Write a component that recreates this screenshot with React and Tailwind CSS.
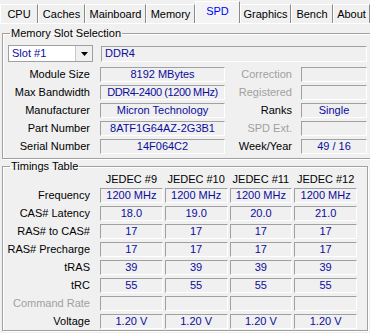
import React from 'react';

const tabs = [
  { label: 'CPU', w: 'w-[38px]' },
  { label: 'Caches', w: 'w-[47px]' },
  { label: 'Mainboard', w: 'w-[61px]' },
  { label: 'Memory', w: 'w-[49px]' },
  { label: 'SPD', w: 'w-[45px]', active: true },
  { label: 'Graphics', w: 'w-[51px]' },
  { label: 'Bench', w: 'w-[42px]' },
  { label: 'About', w: 'w-[37px]' },
];

const timings = [
  { label: 'Frequency', values: ['1200 MHz', '1200 MHz', '1200 MHz', '1200 MHz'] },
  { label: 'CAS# Latency', values: ['18.0', '19.0', '20.0', '21.0'] },
  { label: 'RAS# to CAS#', values: ['17', '17', '17', '17'] },
  { label: 'RAS# Precharge', values: ['17', '17', '17', '17'] },
  { label: 'tRAS', values: ['39', '39', '39', '39'] },
  { label: 'tRC', values: ['55', '55', '55', '55'] },
  { label: 'Command Rate', values: ['', '', '', ''], disabled: true },
  { label: 'Voltage', values: ['1.20 V', '1.20 V', '1.20 V', '1.20 V'] },
];

const Box = ({ children, className = '', align = 'text-center' }) => (
  <div
    className={`h-[15px] border border-t-[#a0a0a0] border-l-[#a0a0a0] border-b-white border-r-white text-[#0b0b9c] leading-[13px] whitespace-nowrap overflow-hidden ${align} ${className}`}
  >
    {children}
  </div>
);

const InfoRow = ({ label, value, valueClass = '', label2, value2, dim2 }) => (
  <div className="flex items-center h-[15px]">
    <div className="w-[83px] text-right">{label}</div>
    <Box className={`ml-[10px] w-[125px] ${valueClass}`}>{value}</Box>
    <div className={`w-[67px] text-right ${dim2 ? 'text-[#a0a0a0]' : ''}`}>{label2}</div>
    <Box className="ml-[9px] w-[66px]">{value2}</Box>
  </div>
);

const Group = ({ title, className = '', children }) => (
  <fieldset
    className={`border border-[#a0a0a0] shadow-[inset_1px_1px_0_#fff,1px_1px_0_#fff] px-[4px] ${className}`}
  >
    <legend className="ml-[3px] px-[1px] leading-[13px]">{title}</legend>
    {children}
  </fieldset>
);

export default function App() {
  return (
    <div
      className="w-[370px] h-[333px] bg-[#f0f0f0] overflow-hidden text-[11px] text-black"
      style={{ fontFamily: '"Liberation Sans", Arial, sans-serif' }}
    >
      {/* Tabs */}
      <div className="flex items-end h-[23px]">
        {tabs.map((t) => (
          <div
            key={t.label}
            className={`${t.w} flex items-center justify-center border-l border-t border-r border-l-white border-t-white border-r-[#8a8a8a] ${
              t.active ? 'h-[22px] text-[#0000ff] bg-[#f4f4f4] pb-[2px]' : 'h-[19px]'
            }`}
          >
            {t.label}
          </div>
        ))}
      </div>

      {/* Page */}
      <div className="border-t border-white px-[2px] pt-[3px]">
        <Group title="Memory Slot Selection" className="h-[132px]">
          <div className="flex items-center mt-[5px] ml-[1px]">
            <div className="w-[85px] h-[17px] bg-white border border-[#a0a0a0] flex items-center">
              <span className="flex-1 pl-[3px] text-[#0b0b9c]">Slot #1</span>
              <span className="w-[17px] h-[15px] border-l border-[#c8c8c8] bg-[#f0f0f0] flex items-center justify-center">
                <svg width="7" height="4" viewBox="0 0 7 4">
                  <path d="M0 0h7L3.5 4z" fill="#000" />
                </svg>
              </span>
            </div>
            <Box className="ml-[8px] w-[266px] h-[16px] px-[3px]" align="text-left">DDR4</Box>
          </div>
          <div className="flex flex-col gap-[3px] mt-[5px]">
            <InfoRow label="Module Size" value="8192 MBytes" label2="Correction" dim2 />
            <InfoRow label="Max Bandwidth" value="DDR4-2400 (1200 MHz)" valueClass="tracking-[-0.4px]" label2="Registered" dim2 />
            <InfoRow label="Manufacturer" value="Micron Technology" label2="Ranks" value2="Single" />
            <InfoRow label="Part Number" value="8ATF1G64AZ-2G3B1" label2="SPD Ext." dim2 />
            <InfoRow label="Serial Number" value="14F064C2" label2="Week/Year" value2="49 / 16" />
          </div>
        </Group>

        <Group title="Timings Table" className="mt-[1px] h-[171px]">
          <div className="flex">
            <div className="w-[93px]" />
            <div className="grid grid-cols-4 gap-x-[2px] w-[257px] text-center leading-[12px]">
              <div>JEDEC #9</div>
              <div>JEDEC #10</div>
              <div>JEDEC #11</div>
              <div>JEDEC #12</div>
            </div>
          </div>
          <div className="flex flex-col gap-[3px] mt-[3px]">
            {timings.map((r) => (
              <div key={r.label} className="flex items-center h-[15px]">
                <div className={`w-[83px] text-right ${r.disabled ? 'text-[#a0a0a0]' : ''}`}>{r.label}</div>
                <div className="ml-[10px] grid grid-cols-4 gap-x-[2px] w-[257px]">
                  {r.values.map((v, i) => (
                    <Box key={i}>{v}</Box>
                  ))}
                </div>
              </div>
            ))}
          </div>
        </Group>
      </div>
    </div>
  );
}
